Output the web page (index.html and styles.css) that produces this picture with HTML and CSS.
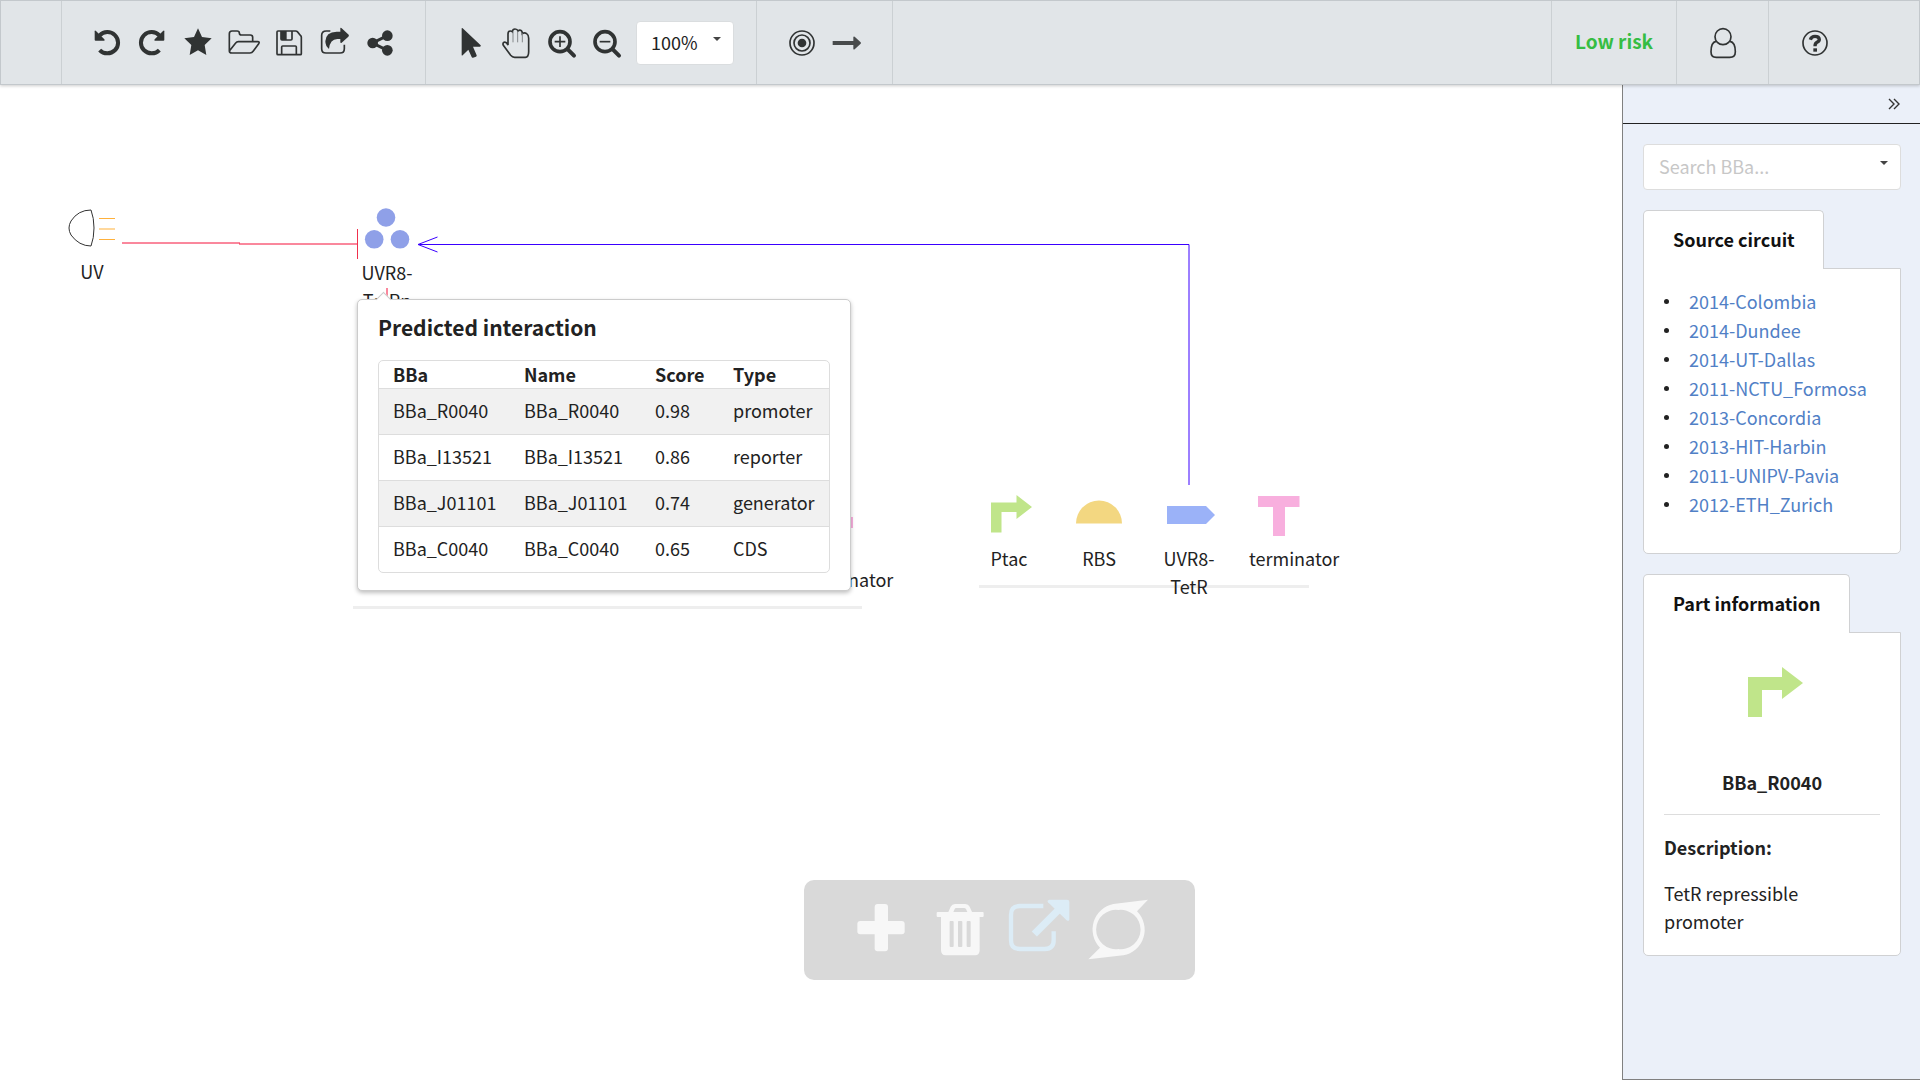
FILE: index.html
```html
<!DOCTYPE html>
<html lang="en">
<head>
<meta charset="utf-8">
<title>Circuit designer</title>
<link rel="stylesheet" href="styles.css">
</head>
<body>
<header class="toolbar">
  <div class="edge"></div>
  <div class="group group-file" role="group" aria-label="File">
    <button class="tool" type="button" aria-label="Undo"><svg class="icon" viewBox="0 0 96 96"><path class="s12" d="M26 25A32 32 0 1 1 26 69"/><path class="fill" d="M11 13Q11 9 15 12L40 37Q43 41 39 41H14Q11 41 11 38Z"/></svg></button>
    <button class="tool" type="button" aria-label="Redo"><svg class="icon" viewBox="0 0 96 96"><path class="s12" d="M70 25A32 32 0 1 0 70 69"/><path class="fill" d="M85 13Q85 9 81 12L56 37Q53 41 57 41H82Q85 41 85 38Z"/></svg></button>
    <button class="tool" type="button" aria-label="Favourite"><svg class="icon" viewBox="0 0 96 96"><path class="fill" d="M48 4L60 30L89 34L68 54L73 84L48 70L23 84L28 54L7 34L36 30Z"/></svg></button>
    <button class="tool" type="button" aria-label="Open"><svg class="icon" viewBox="0 0 96 96"><path class="s5" d="M4 72V20Q4 12 12 12H27Q34 12 34 18Q34 24 40 24H67Q74 24 74 31V44M4 72L23 48Q26 44 31 44H89Q96 44 92 50L76 72Q72 78 66 78H11Q4 78 4 72Z"/></svg></button>
    <button class="tool" type="button" aria-label="Save"><svg class="icon" viewBox="0 0 96 96"><path class="s5" d="M15 12H68Q71 12 73 14L83 26Q85 28 85 31V80Q85 83 82 83H15Q12 83 12 80V15Q12 12 15 12ZM26 83V60Q26 57 29 57H67Q70 57 70 60V83M24 12V36Q24 39 27 39H54Q57 39 57 36V12"/><path class="fill" d="M24 12H41V39H24Z"/></svg></button>
    <button class="tool" type="button" aria-label="Export"><svg class="icon" viewBox="0 0 96 96"><path class="s5" d="M34 12H22Q8 12 8 25V65Q8 78 21 78H63Q76 78 76 65V53"/><path class="fill" d="M64 3Q66 1 68 4L89 23Q91 26 88 29L68 47Q64 49 64 45V36H55Q33 36 30 66Q19 57 19 43Q20 15 53 14H64Z"/></svg></button>
    <button class="tool" type="button" aria-label="Share"><svg class="icon" viewBox="0 0 96 96"><path class="s9" d="M70 26L26 48L70 70"/><circle class="fill" cx="26" cy="48" r="16"/><circle class="fill" cx="70" cy="26" r="16"/><circle class="fill" cx="70" cy="70" r="16"/></svg></button>
  </div>
  <div class="group group-view" role="group" aria-label="View">
    <button class="tool" type="button" aria-label="Select"><svg class="icon" viewBox="0 0 96 96"><path class="fill" d="M20 5Q20 1 23 4L77 55Q79 58 75 59H54L65 85Q66 88 63 89L54 92Q51 93 50 90L40 68L23 85Q20 87 20 83Z"/></svg></button>
    <button class="tool" type="button" aria-label="Pan"><svg class="icon" viewBox="0 0 96 96"><path class="s5" d="M24 54V21Q24 12 31 12Q35 12 37 14Q38 6 45 6Q52 6 54 12Q59 7 64 11Q67 14 67 20Q73 15 80 20Q86 24 86 34V74Q86 90 76 91H44Q37 91 32 85L10 55Q7 49 12 46Q18 43 24 54Z"/><path class="s3" d="M39 14V46M53 14V46M67 19V46"/></svg></button>
    <button class="tool" type="button" aria-label="Zoom in"><svg class="icon" viewBox="0 0 96 96"><circle class="s11" cx="42" cy="44" r="30"/><path class="s12 round" d="M66 68L84 86"/><path class="s5" d="M26 44H58M42 28V60"/></svg></button>
    <button class="tool" type="button" aria-label="Zoom out"><svg class="icon" viewBox="0 0 96 96"><circle class="s11" cx="42" cy="44" r="30"/><path class="s12 round" d="M66 68L84 86"/><path class="s5" d="M26 44H58"/></svg></button>
    <div class="zoom">
      <select class="zoom-select" aria-label="Zoom level"><option>100%</option></select>
      <span class="caret zoom-caret"></span>
    </div>
  </div>
  <div class="group group-draw" role="group" aria-label="Draw">
    <button class="tool" type="button" aria-label="Add node"><svg class="icon" viewBox="0 0 96 96"><circle class="s5" cx="48" cy="48" r="36"/><circle class="s5" cx="48" cy="48" r="24"/><circle class="fill" cx="48" cy="48" r="13"/></svg></button>
    <button class="tool" type="button" aria-label="Add link"><svg class="icon" viewBox="0 0 96 96"><path class="soft" d="M5 42H67V30Q68 27 71 29L89 46Q91 48 89 50L71 67Q68 69 67 66V54H5Z"/></svg></button>
  </div>
  <div class="status">Low risk</div>
  <button class="account" type="button" aria-label="Account"><svg class="icon" viewBox="0 0 96 96"><circle class="s5" cx="48" cy="29" r="24"/><path class="s5" d="M27 43Q12 46 12 74Q12 91 28 91H68Q85 91 85 74Q85 46 69 43"/></svg></button>
  <button class="account" type="button" aria-label="Help"><svg class="icon" viewBox="0 0 96 96"><circle class="s5" cx="48" cy="48" r="36"/><path class="s10" d="M34 38Q37 28 48 28Q60 28 61 37Q61 43 54 46Q48 49 48 58"/><path class="fill" d="M43 64H54V74H43Z"/></svg></button>
  <div class="edge"></div>
</header>

<div class="workspace">
  <main class="canvas">
    <svg class="drawing" width="1400" height="560" viewBox="0 85 1400 560">
      <path class="lamp" d="M91 210Q78 210 71 221Q67 228 71 235Q79 246 91 246Q94 238 94 228Q94 218 91 210Z"/>
      <path class="rays" d="M99 218.500H115M99 229H115M99 239.500H115"/>
      <path class="repress" d="M122 243H240M239 244H357M387 288V310"/>
      <path class="repress-end" d="M357.500 229V259"/>
      <g class="protein"><circle cx="386" cy="217.500" r="9.300"/><circle cx="374.200" cy="239.300" r="9.300"/><circle cx="400" cy="239.300" r="9.300"/></g>
      <path class="promote" d="M437.500 237L418 244.500L437.500 252M418 244.500H1189V485"/>
      <path class="backbone" d="M353 607.500H862M979 586.500H1309"/>
      <path class="promoter" d="M991 532.500V502.500H1016.500V495L1032 507L1016.500 519V512H1001.500V532.500Z"/>
      <path class="rbs" d="M1076 523.500A23 23 0 0 1 1122 523.500Z"/>
      <path class="cds" d="M1167 506H1206L1215 515L1206 524H1167Z"/>
      <path class="terminator" d="M1258 496H1299.500V507H1285V536H1273V507H1258Z"/>
      <path class="terminator" d="M812 517H853V528H839V557H827V528H812Z"/>
    </svg>
    <span class="node-label at-uv">UV</span>
    <span class="node-label at-complex">UVR8-<br>TetRp</span>
    <span class="node-label at-end-left">terminator</span>
    <span class="node-label at-ptac">Ptac</span>
    <span class="node-label at-rbs">RBS</span>
    <span class="node-label at-cds">UVR8-<br>TetR</span>
    <span class="node-label at-end-right">terminator</span>

    <section class="popup">
      <h2 class="popup-title">Predicted interaction</h2>
      <div class="table-frame">
      <table class="parts">
        <thead><tr><th>BBa</th><th>Name</th><th>Score</th><th>Type</th></tr></thead>
        <tbody>
          <tr><td>BBa_R0040</td><td>BBa_R0040</td><td>0.98</td><td>promoter</td></tr>
          <tr><td>BBa_I13521</td><td>BBa_I13521</td><td>0.86</td><td>reporter</td></tr>
          <tr><td>BBa_J01101</td><td>BBa_J01101</td><td>0.74</td><td>generator</td></tr>
          <tr><td>BBa_C0040</td><td>BBa_C0040</td><td>0.65</td><td>CDS</td></tr>
        </tbody>
      </table>
      </div>
    </section>

    <div class="dock">
      <button class="dock-button" type="button" aria-label="Add"><svg class="dock-icon" viewBox="0 0 192 192"><rect x="77" y="18" width="40" height="142" rx="9"/><rect x="25" y="69" width="142" height="40" rx="9"/></svg></button>
      <button class="dock-button" type="button" aria-label="Delete"><svg class="dock-icon" viewBox="0 0 192 192"><path fill-rule="evenodd" d="M29 42H61L68 26Q72 18 81 18H112Q121 18 125 26L132 42H164Q167 42 167 45V53Q167 57 164 57H155V156Q155 172 141 172H53Q39 172 39 156V57H29Q26 57 26 53V45Q26 42 29 42ZM76 42H118L114 33Q112 30 108 30H85Q81 30 80 33ZM67 69Q65 69 65 72V144Q65 147 68 147H74Q77 147 77 144V72Q77 69 74 69ZM92 69Q90 69 90 72V144Q90 147 93 147H100Q103 147 103 144V72Q103 69 100 69ZM119 69Q116 69 116 72V144Q116 147 119 147H125Q128 147 128 144V72Q128 69 125 69Z"/></svg></button>
      <button class="dock-button" type="button" aria-label="Open"><svg class="dock-icon is-open" viewBox="0 0 192 192"><path class="outline" d="M109 24H38Q12 24 12 50V127Q12 153 38 153H114Q140 153 140 127V100"/><path class="shaft" d="M82 108L160 30"/><path d="M127 5H180Q187 5 187 12V65Q184 71 179 67L123 13Q119 7 127 5Z"/></svg></button>
      <button class="dock-button" type="button" aria-label="Replace"><svg class="dock-icon" viewBox="0 0 192 192"><path fill-rule="evenodd" d="M186 5L153 40A78 78 0 0 1 112 172L7 184L42 149A78 78 0 0 1 82 18ZM97 36A59 59 0 1 0 97 153A59 59 0 1 0 97 36Z"/></svg></button>
    </div>
  </main>

  <aside class="side">
    <div class="side-top"><button class="collapse" type="button" aria-label="Collapse panel"><svg class="chevrons" viewBox="0 0 12 12"><path d="M1 1L6 6L1 11M6 1L11 6L6 11"/></svg></button></div>
    <div class="side-body">
      <div class="search">
        <input class="search-input" type="text" placeholder="Search BBa..." aria-label="Search BBa">
        <span class="caret search-caret"></span>
      </div>
      <section class="card">
        <h3 class="tab">Source circuit</h3>
        <div class="panel">
          <ul class="sources">
            <li><a href="#">2014-Colombia</a></li>
            <li><a href="#">2014-Dundee</a></li>
            <li><a href="#">2014-UT-Dallas</a></li>
            <li><a href="#">2011-NCTU_Formosa</a></li>
            <li><a href="#">2013-Concordia</a></li>
            <li><a href="#">2013-HIT-Harbin</a></li>
            <li><a href="#">2011-UNIPV-Pavia</a></li>
            <li><a href="#">2012-ETH_Zurich</a></li>
          </ul>
        </div>
      </section>
      <section class="card">
        <h3 class="tab">Part information</h3>
        <div class="panel part">
          <svg class="part-picture" viewBox="0 0 64 50"><path class="promoter" d="M8 50V10H42V0L63 16L42 32V23H22V50Z"/></svg>
          <p class="part-name">BBa_R0040</p>
          <h4 class="part-heading">Description:</h4>
          <p class="part-text">TetR repressible promoter</p>
        </div>
      </section>
    </div>
  </aside>
</div>
</body>
</html>
```
FILE: styles.css
```css
* { box-sizing: border-box; }

body {
  margin: 0;
  min-height: 100vh;
  display: flex;
  flex-direction: column;
  background: #fff;
  color: #222;
  font-family: "Noto Sans CJK SC", "Noto Sans", sans-serif;
  font-size: 18px;
  line-height: 28px;
}

h2, h3, h4, p, ul { margin: 0; }
button, input, select { font: inherit; color: inherit; }
button { padding: 0; border: 0; background: none; cursor: pointer; }

/* Toolbar */
.toolbar {
  position: relative;
  z-index: 2;
  display: flex;
  height: 85px;
  background: #e1e5e8;
  border: 1px solid #c3c8cc;
  box-shadow: 0 1px 3px rgba(0, 0, 0, .2);
}
.edge { flex: none; width: 60px; }
.edge:last-child { width: 59px; }
.group {
  flex: none;
  display: flex;
  align-items: center;
  padding: 0 22px;
  border-left: 1px solid #cbd0d3;
}
.group-file { width: 364px; }
.group-view { width: 331px; }
.group-draw { width: 137px; border-right: 1px solid #cbd0d3; }
.tool { flex: 1; height: 46px; display: grid; place-items: center; }
.icon { display: block; width: 32px; height: 32px; fill: none; stroke: #303333; }
.fill { fill: #303333; stroke: none; }
.soft { fill: #484b4c; stroke: none; }
.s3 { stroke-width: 3; stroke: #85898b; }
.s5 { stroke-width: 5; }
.s9 { stroke-width: 9; }
.s10 { stroke-width: 10; }
.s11 { stroke-width: 11; }
.s12 { stroke-width: 12; }
.round { stroke-linecap: round; }

.zoom { position: relative; margin-left: 6px; }
.zoom-select {
  appearance: none;
  display: block;
  width: 98px;
  height: 44px;
  padding: 0 14px 2px;
  border: 1px solid #dadddf;
  border-radius: 4px;
  background: #fff;
}
.caret {
  position: absolute;
  border: 4px solid transparent;
  border-top-color: #444;
  border-bottom: 0;
  pointer-events: none;
}
.zoom-caret { right: 13px; top: 16px; }

.status {
  display: grid;
  place-items: center;
  width: 125px;
  padding-bottom: 4px;
  margin-left: auto;
  border-left: 1px solid #cbd0d3;
  color: #36bd43;
  font-size: 19px;
  font-weight: 700;
}
.account {
  display: grid;
  place-items: center;
  width: 92px;
  border-left: 1px solid #cbd0d3;
}

/* Canvas */
.workspace { flex: 1; display: flex; }
.canvas { position: relative; flex: 1; min-width: 0; }
.drawing { position: absolute; left: 0; top: 0; fill: none; }
.lamp { stroke: #333; }
.rays { stroke: #ffb13b; }
.repress { stroke: #f5103a; }
.repress-end { stroke: #f0304d; }
.protein { fill: #8fa0e8; }
.promote { stroke: #3a00ff; }
.backbone { stroke: #eee; stroke-width: 3; }
.promoter { fill: #c0e58a; }
.rbs { fill: #f3d781; }
.cds { fill: #9bb2f8; }
.terminator { fill: #f8afde; }

.node-label {
  position: absolute;
  width: 90px;
  text-align: center;
}
.at-uv { left: 47px; top: 172px; }
.at-complex { left: 342px; top: 173px; }
.at-end-left { left: 803px; top: 480px; }
.at-ptac { left: 964px; top: 459px; }
.at-rbs { left: 1054px; top: 459px; }
.at-cds { left: 1144px; top: 459px; }
.at-end-right { left: 1249px; top: 459px; }

/* Popup */
.popup {
  position: absolute;
  left: 357px;
  top: 214px;
  padding: 13px 20px 17px;
  background: #fff;
  border: 1px solid #ccc;
  border-radius: 5px;
  box-shadow: 0 2px 4px rgba(0, 0, 0, .25);
}
.popup::before {
  content: "";
  position: absolute;
  left: 20px;
  top: -6px;
  width: 10px;
  height: 10px;
  background: #fff;
  border: 1px solid #ccc;
  border-right: 0;
  border-bottom: 0;
  transform: rotate(45deg);
}
.popup-title { font-size: 21px; line-height: 28px; font-weight: 700; }
.table-frame {
  margin-top: 19px;
  border: 1px solid #ddd;
  border-radius: 5px;
  overflow: hidden;
}
.parts { border-collapse: collapse; table-layout: fixed; width: 450px; }
.parts th, .parts td { padding: 0 0 0 14px; text-align: left; }
.parts th { height: 27px; line-height: 26px; font-weight: 700; width: 131px; }
.parts th:nth-child(3) { width: 78px; }
.parts th:nth-child(4) { width: 110px; }
.parts td { height: 46px; padding-bottom: 2px; border-top: 1px solid #ddd; }
.parts tbody tr:nth-child(odd) { background: #f1f1f1; }

/* Floating actions */
.dock {
  position: absolute;
  left: 804px;
  bottom: 100px;
  display: flex;
  align-items: center;
  gap: 15px;
  height: 100px;
  padding: 0 45px;
  border-radius: 10px;
  background: #d9d9d9;
}
.dock-icon { display: block; width: 64px; height: 64px; fill: #f7f7f7; }
.dock-icon.is-open { fill: #dcecf6; }
.outline, .shaft { fill: none; stroke: #dcecf6; stroke-width: 13; stroke-linecap: butt; }
.shaft { stroke-width: 22; }

/* Side panel */
.side {
  width: 298px;
  background: #ebf0f9;
  border: 1px solid #808080;
  border-top: 0;
  border-right: 0;
}
.side-top {
  display: flex;
  align-items: center;
  justify-content: flex-end;
  height: 39px;
  padding-right: 20px;
  border-bottom: 1px solid #222;
}
.chevrons { display: block; width: 12px; height: 12px; fill: none; stroke: #333; stroke-width: 1.400; }
.side-body { display: flex; flex-direction: column; gap: 20px; padding: 20px 19px 20px 20px; }
.search { position: relative; }
.search-input {
  display: block;
  width: 100%;
  height: 46px;
  padding: 0 15px 2px;
  border: 1px solid #ddd;
  border-radius: 4px;
  background: #fff;
}
.search-input::placeholder { color: #c7c7c7; opacity: 1; }
.search-caret { right: 13px; top: 17px; }

.card { display: flex; flex-direction: column; align-items: flex-start; }
.tab {
  position: relative;
  z-index: 1;
  margin-bottom: -1px;
  padding: 14px 28px 15px 29px;
  background: #fff;
  border: 1px solid #d0d1d3;
  border-bottom: 0;
  border-radius: 5px 5px 0 0;
  color: #111;
  font-size: 18px;
  line-height: 29px;
}
.panel {
  width: 100%;
  padding: 18px 20px 34px;
  background: #fff;
  border: 1px solid #d0d1d3;
  border-radius: 0 0 5px 5px;
}
.sources { padding: 0; list-style: none; line-height: 29px; }
.sources li { display: flex; align-items: center; gap: 20px; }
.sources li::before { content: ""; width: 5px; height: 5px; border-radius: 50%; background: #222; }
.sources a { color: #5180c6; text-decoration: none; }
.part { padding: 34px 20px 20px; }
.part-picture { display: block; width: 64px; height: 50px; margin: 0 auto; }
.part-name {
  margin-top: 51px;
  padding-bottom: 18px;
  border-bottom: 1px solid #ddd;
  font-weight: 700;
  text-align: center;
}
.part-heading { margin: 18px 0; font-size: 18px; }
```
